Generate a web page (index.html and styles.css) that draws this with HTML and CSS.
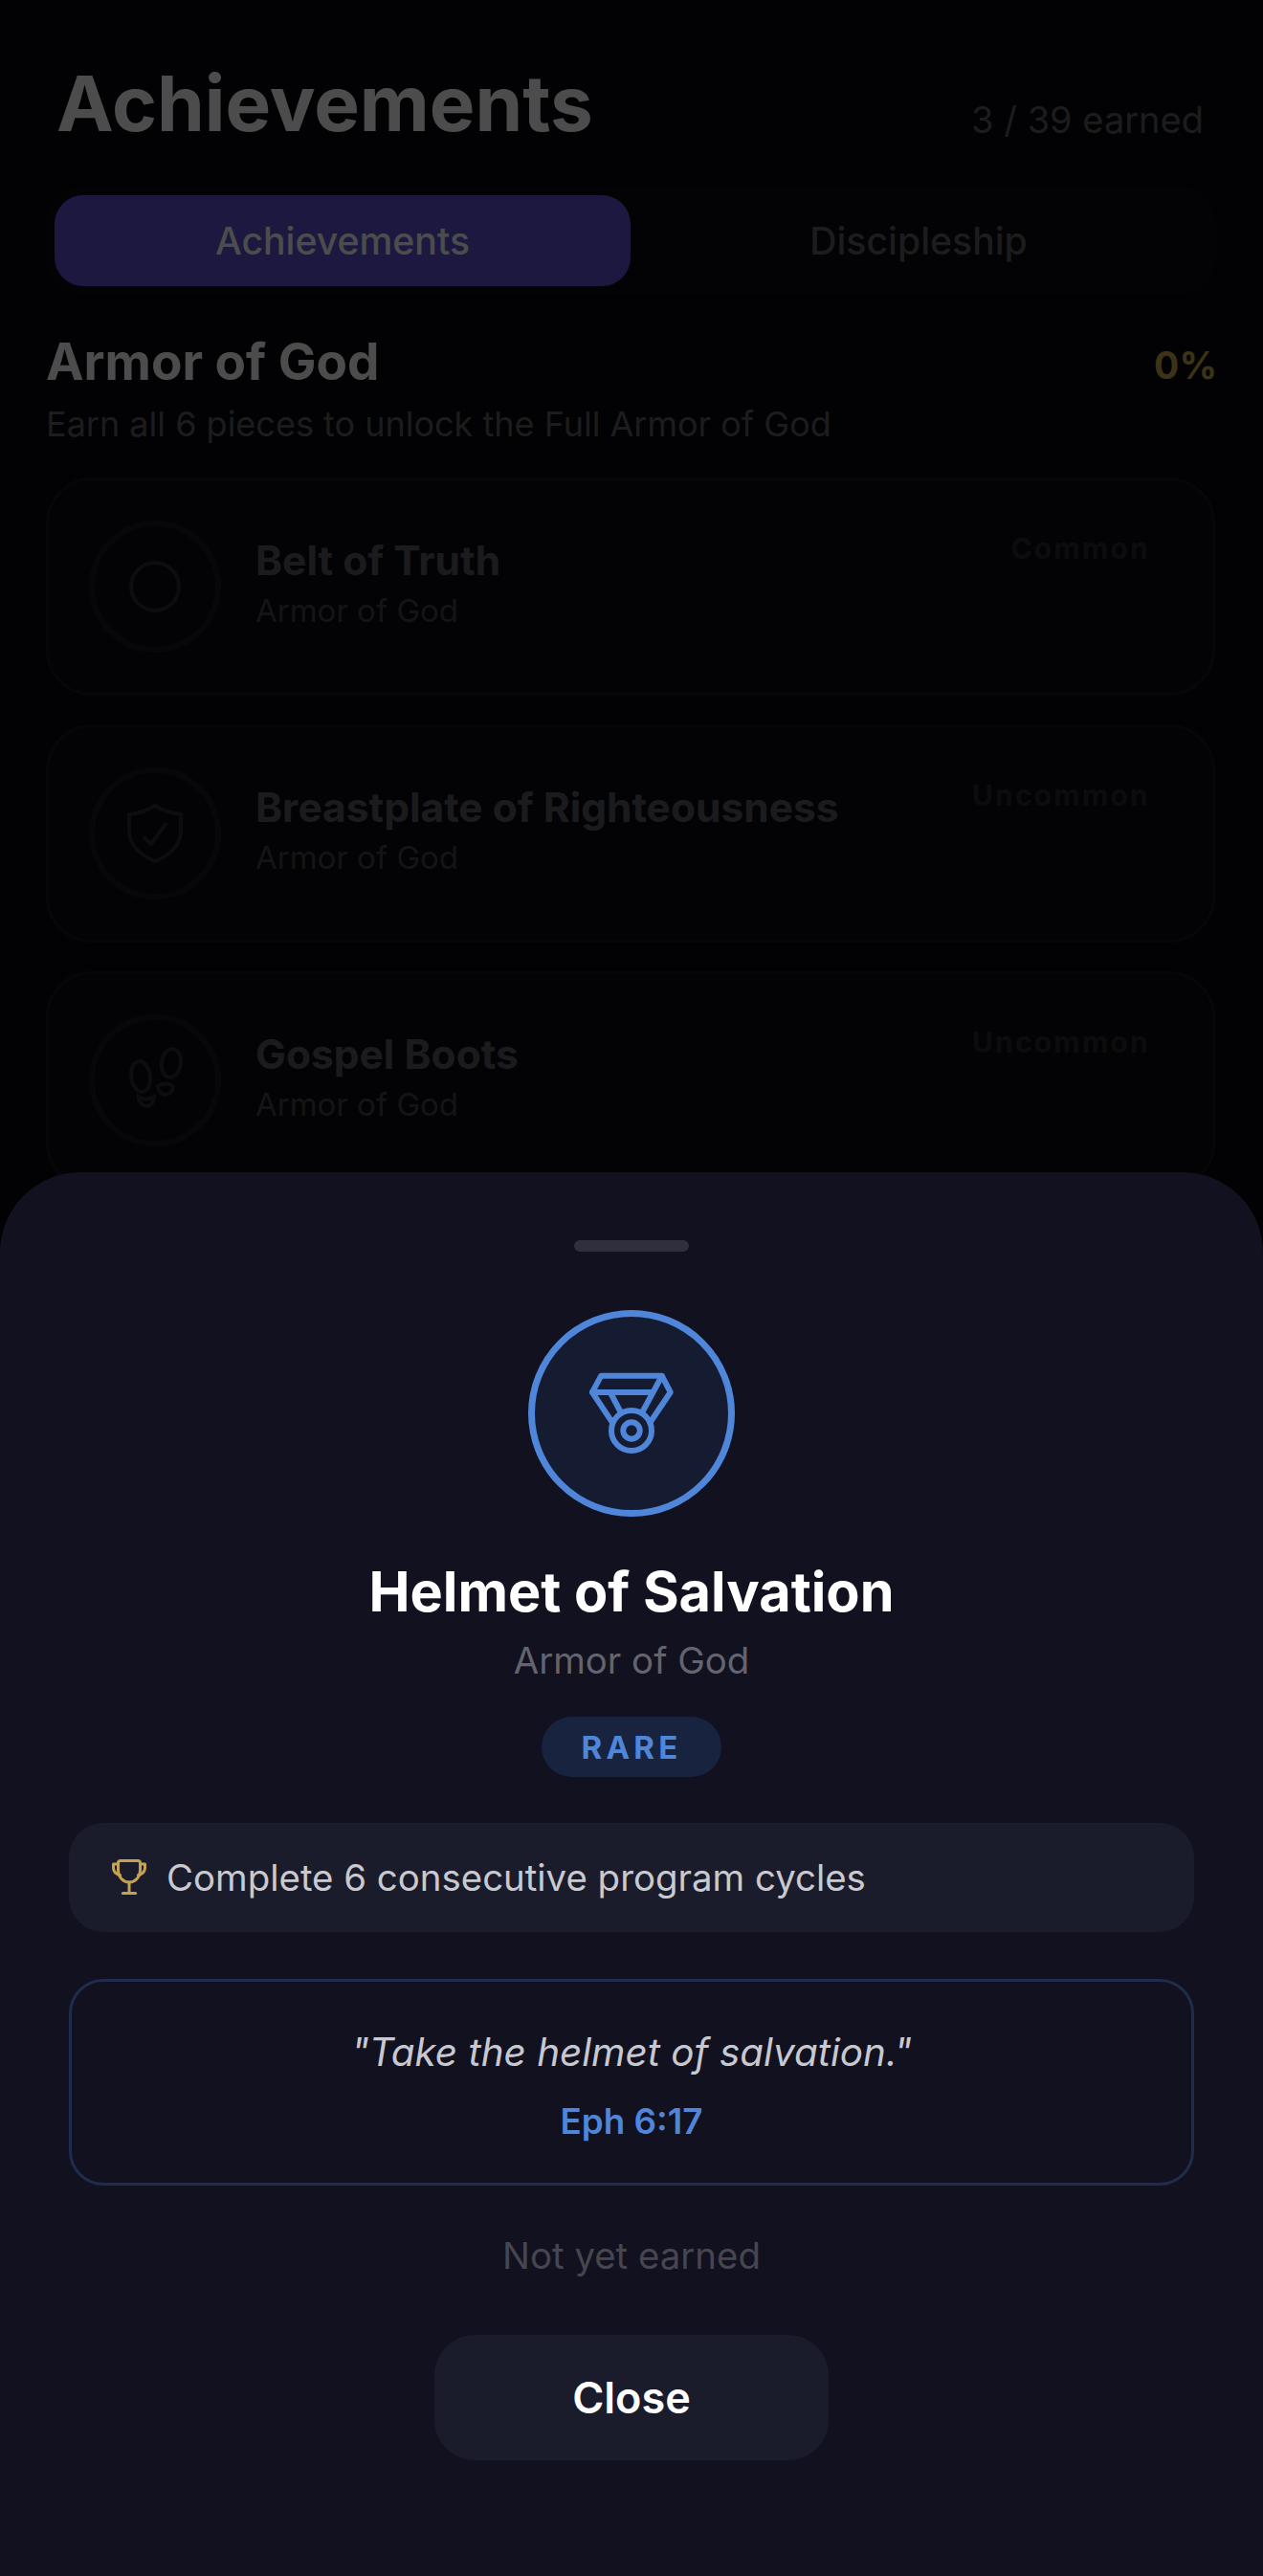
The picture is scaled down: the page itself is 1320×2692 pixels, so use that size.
FILE: index.html
```html
<!DOCTYPE html>
<html lang="en">
<head>
    <meta charset="UTF-8">
    <meta name="viewport" content="width=device-width, initial-scale=1.0">
    <title>Achievements</title>
    <link rel="stylesheet" href="styles.css">
</head>
<body>
    <div class="page">
        <header class="top">
            <h1>Achievements</h1>
            <span class="earned">3 / 39 earned</span>
        </header>

        <div class="tabs">
            <div class="tab active">Achievements</div>
            <div class="tab">Discipleship</div>
        </div>

        <div class="section-head">
            <h2>Armor of God</h2>
            <span class="percent">0%</span>
        </div>
        <p class="section-sub">Earn all 6 pieces to unlock the Full Armor of God</p>

        <div class="card">
            <div class="badge">
                <svg class="badge-icon" viewBox="0 0 60 60"><circle cx="30" cy="30" r="25"/></svg>
            </div>
            <div class="card-text">
                <div class="card-name">Belt of Truth</div>
                <div class="card-sub">Armor of God</div>
            </div>
            <span class="rarity">Common</span>
        </div>

        <div class="card">
            <div class="badge">
                <svg class="badge-icon" viewBox="0 0 60 60">
                    <path d="M30 1 C22 6 12 9 3 10 V28 C3 42 15 53 30 59 C45 53 57 42 57 28 V10 C48 9 38 6 30 1 Z"/>
                    <path d="M18 34 L26 41 L42 19"/>
                </svg>
            </div>
            <div class="card-text">
                <div class="card-name">Breastplate of Righteousness</div>
                <div class="card-sub">Armor of God</div>
            </div>
            <span class="rarity">Uncommon</span>
        </div>

        <div class="card">
            <div class="badge">
                <svg class="badge-icon" viewBox="0 0 60 60">
                    <ellipse cx="15" cy="26" rx="10" ry="16" transform="rotate(-8 15 26)"/>
                    <path d="M13 47 C18 50 24 50 29 47 C29 53 25 57 21 57 C17 57 13 53 13 47 Z"/>
                    <ellipse cx="47" cy="12" rx="10" ry="15" transform="rotate(8 47 12)"/>
                    <path d="M33 36 C38 33 44 33 49 36 C49 41 45 45 41 45 C37 45 33 41 33 36 Z"/>
                </svg>
            </div>
            <div class="card-text">
                <div class="card-name">Gospel Boots</div>
                <div class="card-sub">Armor of God</div>
            </div>
            <span class="rarity">Uncommon</span>
        </div>
    </div>

    <div class="overlay"></div>

    <div class="sheet">
        <div class="handle"></div>
        <div class="medal">
            <svg class="medal-icon" viewBox="0 0 96 96">
                <path d="M28 57.7 L7 26 L16.3 8.7 H79.7 L88.7 26 L67.3 57.7"/>
                <path d="M7 26 H70"/>
                <path d="M26.3 27 L36.3 46"/>
                <path d="M79.7 9 L59.7 46"/>
                <circle cx="48" cy="66" r="21"/>
                <circle cx="48" cy="66" r="8.7"/>
            </svg>
        </div>
        <div class="sheet-title">Helmet of Salvation</div>
        <div class="sheet-sub">Armor of God</div>
        <div class="rare-pill">RARE</div>

        <div class="requirement">
            <svg class="trophy" viewBox="0 0 36 38">
                <path d="M9 1.5 H27 Q29.5 1.5 29.5 4 V11 C29.5 19 24 24 18 24 C12 24 6.5 19 6.5 11 V4 Q6.5 1.5 9 1.5 Z"/>
                <path d="M6.5 5 H1.5 V9 C1.5 12.5 4.5 15.5 8.7 16.7"/>
                <path d="M29.5 5 H34.5 V9 C34.5 12.5 31.5 15.5 27.3 16.7"/>
                <path d="M18 24 V35"/>
                <path d="M11.3 35.5 H24.7"/>
            </svg>
            <span>Complete 6 consecutive program cycles</span>
        </div>

        <div class="verse">
            <div class="verse-text">"Take the helmet of salvation."</div>
            <div class="verse-ref">Eph 6:17</div>
        </div>

        <div class="status">Not yet earned</div>
        <button class="close-btn">Close</button>
    </div>
</body>
</html>
```
FILE: styles.css
```css
* {
    box-sizing: border-box;
}
html, body {
    margin: 0;
    padding: 0;
    height: 2692px;
    overflow: hidden;
}
body {
    position: relative;
    font-family: Inter, "Liberation Sans", sans-serif;
    background-color: #070710;
    color: #ffffff;
}
.page {
    padding: 60px 50px 0 48px;
}

/* header */
.top {
    display: flex;
    justify-content: space-between;
    align-items: flex-end;
    height: 96px;
    padding: 0 12px 0 11px;
}
h1 {
    margin: 0;
    font-size: 80px;
    line-height: 96px;
    font-weight: 700;
}
.earned {
    margin-bottom: -5px;
    font-size: 38px;
    line-height: 72px;
    color: #5f5f63;
}

/* tabs */
.tabs {
    display: flex;
    margin-top: 39px;
    padding: 9px;
    border-radius: 36px;
    background-color: #0a0a17;
}
.tab {
    flex: 1;
    height: 95px;
    display: flex;
    align-items: center;
    justify-content: center;
    border-radius: 30px;
    font-size: 39.2px;
    font-weight: 500;
    color: #5f5f63;
}
.tab.active {
    background-color: #5e52d6;
    color: #ffffff;
}

/* section */
.section-head {
    display: flex;
    justify-content: space-between;
    align-items: center;
    margin-top: 37px;
    height: 66px;
}
h2 {
    margin: 0;
    font-size: 53px;
    line-height: 66px;
    font-weight: 700;
}
.percent {
    margin: 7px -2px 0 0;
    font-size: 39px;
    font-weight: 700;
    color: #c9a84c;
}
.section-sub {
    margin: 8px 0 0;
    font-size: 36px;
    line-height: 48px;
    color: #5f5f63;
}

/* cards */
.card {
    display: flex;
    align-items: flex-start;
    height: 228px;
    margin-top: 30px;
    padding: 42px;
    border: 3px solid #16161f;
    border-radius: 48px;
    background-color: #0a0a17;
}
.section-sub + .card {
    margin-top: 32px;
}
.badge {
    flex: none;
    width: 138px;
    height: 138px;
    display: flex;
    align-items: center;
    justify-content: center;
    border: 6px solid #1a1a20;
    border-radius: 50%;
}
.badge-icon {
    width: 60px;
    height: 60px;
    overflow: visible;
    fill: none;
    stroke: #2c2c33;
    stroke-width: 4;
}
.card-text {
    flex: 1;
    margin-left: 36px;
    padding-top: 14px;
}
.card-name {
    font-size: 42.5px;
    line-height: 56px;
    font-weight: 700;
    color: #5c5c62;
}
.card-sub {
    margin-top: 2px;
    font-size: 33px;
    line-height: 44px;
    color: #454548;
}
.rarity {
    margin: -1px -1px 0 0;
    padding: 10px 24px;
    border-radius: 30px;
    font-size: 30px;
    line-height: 40px;
    font-weight: 700;
    letter-spacing: 2.2px;
    color: #2a2a2e;
    background-color: #0a0a15;
}

.overlay {
    position: absolute;
    inset: 0;
    background-color: rgba(0, 0, 0, 0.7);
}

/* bottom sheet */
.sheet {
    position: absolute;
    left: 0;
    right: 0;
    bottom: 0;
    height: 1467px;
    display: flex;
    flex-direction: column;
    align-items: center;
    padding: 71px 72px 0;
    border-radius: 84px 84px 0 0;
    background-color: #11111f;
}
.handle {
    width: 120px;
    height: 12px;
    border-radius: 6px;
    background-color: #2f2f3e;
}
.medal {
    width: 216px;
    height: 216px;
    margin-top: 61px;
    display: flex;
    align-items: center;
    justify-content: center;
    border: 7px solid #4f86d9;
    border-radius: 50%;
    background-color: #151b31;
}
.medal-icon {
    width: 96px;
    height: 96px;
    fill: none;
    stroke: #4f86d9;
    stroke-width: 6;
    stroke-linejoin: round;
    stroke-linecap: round;
}
.sheet-title {
    margin-top: 40px;
    font-size: 57.6px;
    line-height: 76px;
    font-weight: 700;
}
.sheet-sub {
    margin-top: 10px;
    font-size: 38.4px;
    line-height: 48px;
    color: #63646e;
}
.rare-pill {
    width: 188px;
    height: 63px;
    margin-top: 35px;
    display: flex;
    align-items: center;
    justify-content: center;
    border-radius: 32px;
    font-size: 33px;
    font-weight: 700;
    letter-spacing: 4.2px;
    color: #4f86d9;
    background-color: #182340;
}
.requirement {
    width: 100%;
    height: 114px;
    margin-top: 48px;
    padding: 0 45px;
    display: flex;
    align-items: center;
    gap: 21px;
    border-radius: 36px;
    background-color: #1a1c2c;
    font-size: 38.4px;
    color: #c9c9d0;
}
.trophy {
    width: 36px;
    height: 38px;
    flex: none;
    fill: none;
    stroke: #c5a253;
    stroke-width: 3;
    stroke-linecap: round;
    stroke-linejoin: round;
}
.verse {
    width: 100%;
    height: 216px;
    margin-top: 49px;
    padding-top: 6px;
    display: flex;
    flex-direction: column;
    align-items: center;
    justify-content: center;
    border: 3px solid #212c4d;
    border-radius: 36px;
}
.verse-text {
    font-size: 40.4px;
    line-height: 54px;
    font-style: italic;
    color: #c8c8d0;
}
.verse-ref {
    margin-top: 22px;
    font-size: 36.8px;
    line-height: 46px;
    font-weight: 600;
    color: #4f86d9;
}
.status {
    margin-top: 48px;
    font-size: 38.4px;
    line-height: 50px;
    color: #45464f;
}
.close-btn {
    width: 412px;
    height: 131px;
    margin-top: 58px;
    border: none;
    border-radius: 42px;
    background-color: #1a1c2c;
    color: #ffffff;
    font-family: inherit;
    font-size: 45px;
    font-weight: 600;
}
```
